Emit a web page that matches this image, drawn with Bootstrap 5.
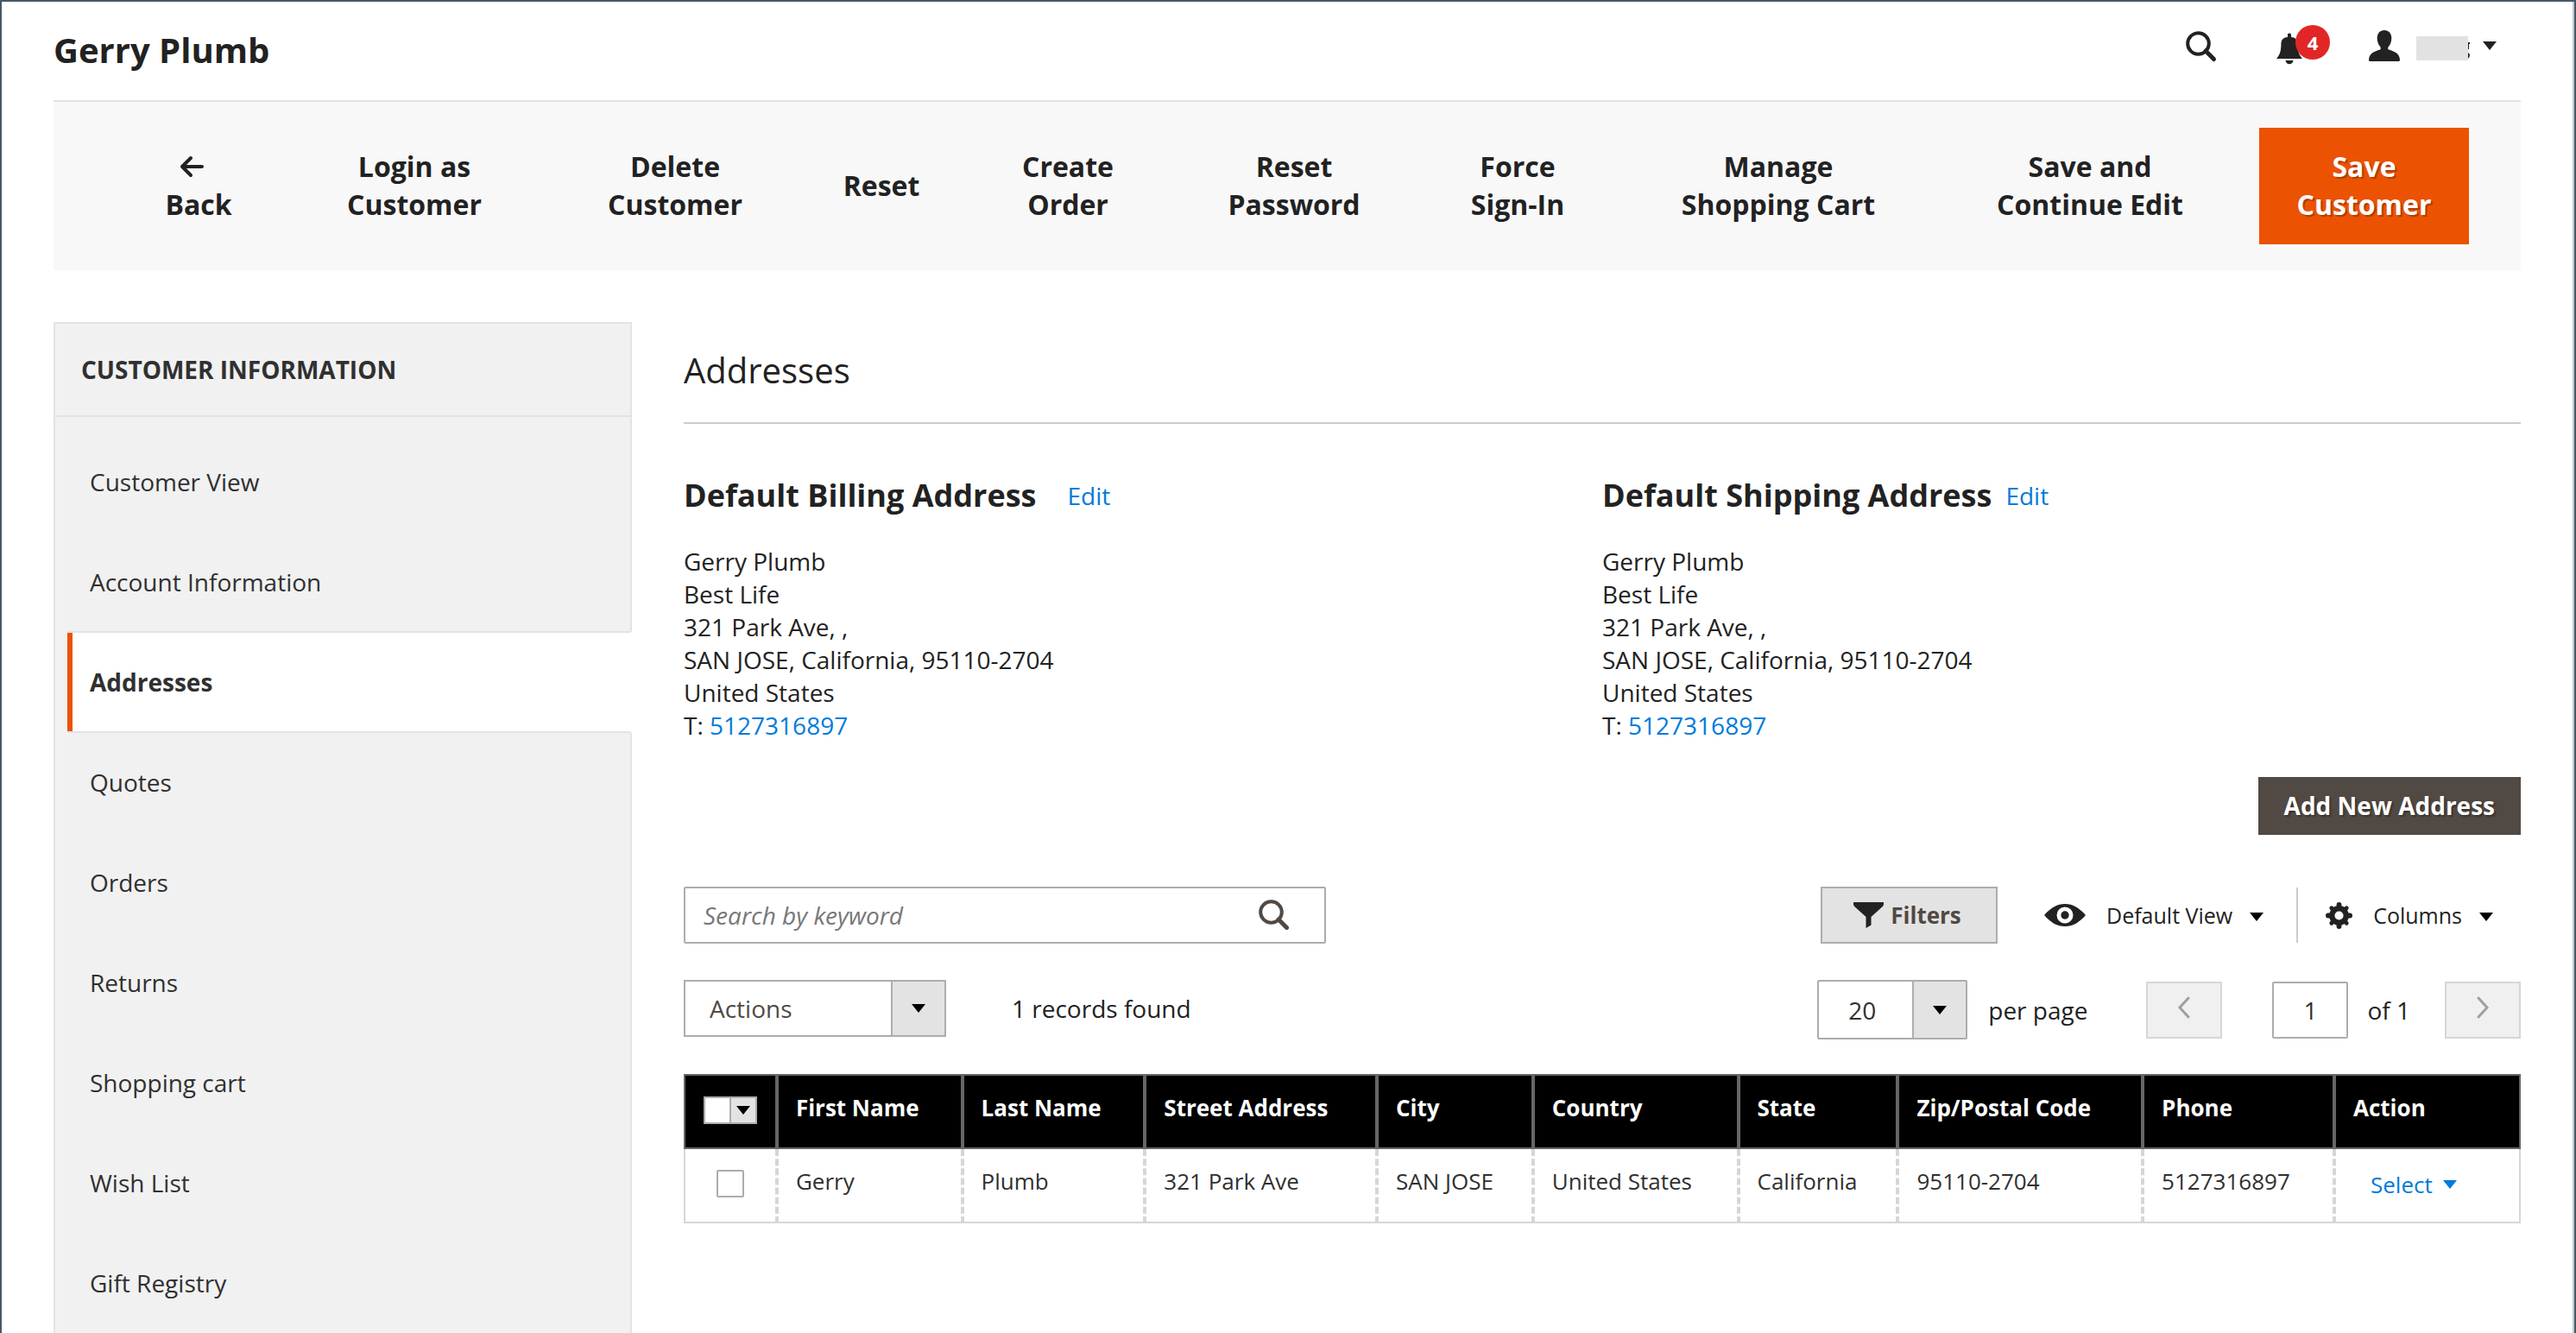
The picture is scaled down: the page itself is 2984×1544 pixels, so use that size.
<!DOCTYPE html>
<html lang="en">
<head>
<meta charset="utf-8">
<meta name="viewport" content="width=device-width, initial-scale=1">
<title>Gerry Plumb - Customers</title>
<link rel="stylesheet" href="https://cdn.jsdelivr.net/npm/bootstrap@5.3.0/dist/css/bootstrap.min.css">
<style>
  body { font-family: "Open Sans", "Noto Sans", sans-serif; font-size: 28px; line-height: 38px; color: #222; background: #fff; }
  a, .select-link { color: #007bdb; text-decoration: none; }
  button { color: inherit; }
  svg { display: block; flex: none; }
  .admin-page { min-height: 100vh; border-top: 2px solid #455a64; border-left: 2px solid #455a64; border-right: 2px solid #455a64; box-shadow: inset -2px 0 #c4cbce; padding: 0 62px 0 60px; }
  .page-head { height: 114px; padding-right: 28px; }
  .page-head h1 { font-size: 40px; line-height: 56px; font-weight: 700; padding-bottom: 2px; }
  .head-tools { padding-bottom: 10px; }
  .bare { background: none; border: 0; padding: 0; border-radius: 0; display: flex; align-items: center; }
  .bell { position: relative; margin: 6px 77px 0 68px; }
  .bell-count { position: absolute; left: 22px; top: -9px; width: 40px; height: 40px; border-radius: 50%; background: #e22626; color: #fff; font-size: 22px; line-height: 40px; font-weight: 700; text-align: center; }
  .account { padding-bottom: 2px; }
  .redacted { margin: 6px 15px 0 19px; }
  .action-bar { display: grid; grid-template-columns: 190fr 310fr 294fr 184fr 248fr 276fr 242fr 362fr 376fr 243fr; background: #f8f8f8; border-top: 2px solid #e3e3e3; padding: 30px 60px 30px 73px; font-size: 32px; line-height: 44px; }
  .action-bar button { background: none; border: 0; padding: 0 0 2px; min-height: 135px; font-weight: 700; }
  .action-bar .wide-end { padding-right: 16px; }
  .action-bar .save { background: #eb5202; color: #fff; text-shadow: 2px 2px 0 rgba(0,0,0,.25); }
  .back-arrow { height: 44px; margin-right: 16px; }
  .page-body { margin-top: 60px; gap: 60px; }
  .side { width: 670px; flex: none; background: #f1f1f1; border: 2px solid #e3e3e3; border-bottom: 0; color: #303030; }
  .side h2 { font-size: 28px; line-height: 38px; font-weight: 700; padding: 34px 30px; border-bottom: 2px solid #e3e3e3; margin: 0; text-transform: uppercase; }
  .side ul { margin: 0; padding: 16px 0 0 14px; list-style: none; }
  .side li a { display: block; color: #303030; border: 2px solid transparent; border-left: 6px solid transparent; padding: 38px 20px; margin-bottom: -2px; }
  .side li a.active { background: #fff; border-color: #e3e3e3 #fff #e3e3e3 #eb5202; margin-right: -2px; font-weight: 700; position: relative; border-left-style: none; padding-left: 26px; box-shadow: inset 6px 0 #eb5202; }
  .section-title { font-size: 40px; line-height: 56px; font-weight: 400; padding: 28px 0 32px; border-bottom: 2px solid #ccc; margin: 0 0 58px; }
  .addr-head { gap: 16px; }
  .addr-head.spaced { gap: 36px; }
  .addr-head h3 { font-size: 36px; line-height: 50px; font-weight: 700; margin: 0; }
  address { margin: 32px 0 41px; line-height: 38px; }
  .add-new { background: #514943; color: #fff; border: 0; padding: 14px 30px 15px; font-weight: 700; line-height: 38px; text-shadow: 2px 2px 2px rgba(0,0,0,.3); }
  .boxed { border: 2px solid #adadad; background: #fff; height: 66px; border-radius: 2px; }
  .search-box { width: 744px; }
  .search-box input { border: 0; outline: 0; background: none; font-size: 28px; padding: 0 21px; min-width: 0; }
  .search-box input::placeholder { color: #777; font-style: italic; opacity: 1; }
  .grid-tools { margin-top: 60px; font-size: 26px; }
  .filters-btn { width: 205px; background: #e3e3e3; color: #514943; font-weight: 700; border-radius: 0; gap: 8px; padding: 0 4px 0 0; }
  .view-btn, .cols-btn { font-size: 25px; }
  .view-btn { padding-left: 54px; }
  .caret-after { margin: 4px 0 0 20px; }
  .cols-btn { border-left: 2px solid #ccc; padding: 0 32px; height: 64px; margin-left: 38px; }
  .grid-pager { margin-top: 42px; height: 69px; }
  .found { line-height: 66px; margin-left: 76px; }
  .pick { position: relative; }
  .pick select { appearance: none; width: 100%; height: 100%; border: 0; background: none; color: inherit; padding: 0 28px; font-size: 28px; outline: 0; }
  .pick-arrow { position: absolute; right: 0; top: 0; bottom: 0; width: 62px; background: #e3e3e3; border-left: 2px solid #adadad; display: flex; align-items: center; justify-content: center; pointer-events: none; }
  .pick-actions { width: 304px; color: #514943; border-radius: 0; }
  .pick-size { width: 174px; height: 69px; color: #303030; }
  .pick-size select { padding: 0 34px; }
  .pick-all { width: 62px; height: 32px; margin: 0 auto; background: #fff; border: 2px solid #adadad; }
  .pick-all .pick-arrow { width: 30px; }
  .step { width: 88px; height: 66px; background: #f0f0f0; border: 2px solid #d6d6d6; padding: 0 0 4px; display: flex; align-items: center; justify-content: center; }
  .step-prev { margin-left: 68px; }
  .step-next { margin-left: 40px; }
  .page-no { width: 88px; text-align: center; font-size: 28px; padding: 0; margin: 0 22px 0 58px; color: #303030; }
  .addr-grid { width: 100%; margin-top: 40px; font-size: 26px; line-height: 36px; border-collapse: collapse; color: #303030; }
  .addr-grid th { background: #000; color: #fff; font-weight: 700; border: 2px solid #666; border-left-width: 4px; border-right-width: 4px; padding: 19px 20px 28px; }
  .addr-grid td { border-bottom: 2px solid #d6d6d6; border-left: 4px dashed #d6d6d6; padding: 19px 20px 29px; }
  .addr-grid th:first-child { border-left-width: 2px; }
  .addr-grid th:last-child { border-right-width: 2px; }
  .addr-grid td:first-child { border-left: 2px solid #d6d6d6; }
  .addr-grid td:last-child { border-right: 2px solid #d6d6d6; }
  .addr-grid .tick { padding: 24px 0 0; vertical-align: top; }
  .tick input { appearance: none; display: block; width: 32px; height: 32px; margin: 0 auto; border: 2px solid #adadad; border-radius: 2px; background: #fff; }
  .select-link { gap: 12px; padding: 4px 20px 0; margin-bottom: -4px; }
  .c1{width:107px}.c2{width:215px}.c3{width:212px}.c4{width:269px}.c5{width:181px}.c6{width:238px}.c7{width:185px}.c8{width:284px}.c9{width:222px}.c10{width:215px}
</style>
<script src="https://cdn.jsdelivr.net/npm/bootstrap@5.3.0/dist/js/bootstrap.bundle.min.js"></script>
</head>
<body>
<div class="admin-page d-flex flex-column">
  <header class="page-head d-flex align-items-center justify-content-between">
    <h1 class="m-0">Gerry Plumb</h1>
    <div class="head-tools d-flex align-items-center">
      <button class="bare" type="button" aria-label="Search">
        <svg width="38" height="38" viewBox="0 0 38 38" fill="none" stroke="#222" stroke-width="4"><circle cx="15.500" cy="15.500" r="12.300"/><path d="M24 24l9.500 9.500" stroke-width="5" stroke-linecap="round"/></svg>
      </button>
      <button class="bare bell" type="button" aria-label="Notifications">
        <svg width="30" height="38" viewBox="0 0 30 38" fill="#222"><path d="M13 1.500q2-2 4 0V5c5.500.7 7.500 3.200 7.600 8 .1 8 1.400 12.500 5.400 17H0c4-4.500 5.300-9 5.400-17C5.500 8.200 7.500 5.700 13 5zM10.500 32h9c-.5 3-2.400 4.200-4.500 4.200s-4-1.200-4.500-4.200z"/></svg>
        <span class="bell-count">4</span>
      </button>
      <button class="bare account" type="button" aria-label="Account">
        <svg width="36" height="36" viewBox="0 0 36 36" fill="#222"><path d="M18 0c5.300 0 8.400 4 8.300 9.300-.1 4-1.300 7.400-3.600 10-.7 1-.7 2.700.3 3.300 7 2 12.400 4.400 13 11.400.1 1.300-.5 2-1.500 2h-33c-1 0-1.600-.7-1.500-2 .6-7 6-9.400 13-11.400 1-.6 1-2.300.3-3.300-2.300-2.600-3.500-6-3.600-10C9.600 4 12.700 0 18 0z"/></svg>
        <svg class="redacted" width="62" height="28" viewBox="0 0 62 28"><path fill="#e2e2e2" d="M0 0h60v28H0z"/><path fill="#222" d="M60 7h2v2h-1v6h-1zM60 19q2 1 2 3t-2 4z"/></svg>
        <svg width="16" height="10" fill="#222"><path d="M0 0h16L8 10z"/></svg>
      </button>
    </div>
  </header>

  <div class="action-bar">
    <button type="button"><span class="d-flex justify-content-center align-items-center back-arrow"><svg width="28" height="26" viewBox="0 0 28 26" fill="none" stroke="#222" stroke-width="4" stroke-linecap="round" stroke-linejoin="round"><path d="M26 13H3M13 3L3 13l10 10"/></svg></span>Back</button>
    <button type="button">Login as<br>Customer</button>
    <button type="button">Delete<br>Customer</button>
    <button type="button">Reset</button>
    <button type="button">Create<br>Order</button>
    <button type="button">Reset<br>Password</button>
    <button type="button">Force<br>Sign-In</button>
    <button type="button">Manage<br>Shopping Cart</button>
    <button type="button" class="wide-end">Save and<br>Continue Edit</button>
    <button type="button" class="save">Save<br>Customer</button>
  </div>

  <div class="page-body d-flex flex-grow-1">
    <nav class="side" aria-label="Customer Information">
      <h2>Customer Information</h2>
      <ul>
        <li><a href="#">Customer View</a></li>
        <li><a href="#">Account Information</a></li>
        <li><a href="#" class="active" aria-current="page">Addresses</a></li>
        <li><a href="#">Quotes</a></li>
        <li><a href="#">Orders</a></li>
        <li><a href="#">Returns</a></li>
        <li><a href="#">Shopping cart</a></li>
        <li><a href="#">Wish List</a></li>
        <li><a href="#">Gift Registry</a></li>
      </ul>
    </nav>

    <main class="flex-grow-1">
      <h2 class="section-title">Addresses</h2>
      <div class="row g-0">
        <section class="col-6">
          <div class="addr-head spaced d-flex align-items-center"><h3>Default Billing Address</h3><a href="#">Edit</a></div>
          <address>Gerry Plumb<br>Best Life<br>321 Park Ave, ,<br>SAN JOSE, California, 95110-2704<br>United States<br>T: <a href="tel:5127316897">5127316897</a></address>
        </section>
        <section class="col-6">
          <div class="addr-head d-flex align-items-center"><h3>Default Shipping Address</h3><a href="#">Edit</a></div>
          <address>Gerry Plumb<br>Best Life<br>321 Park Ave, ,<br>SAN JOSE, California, 95110-2704<br>United States<br>T: <a href="tel:5127316897">5127316897</a></address>
        </section>
      </div>
      <div class="d-flex justify-content-end"><button class="add-new" type="button">Add New Address</button></div>

      <div class="grid-tools d-flex align-items-center">
        <div class="boxed search-box d-flex align-items-center me-auto">
          <input class="flex-grow-1" type="text" placeholder="Search by keyword" aria-label="Search by keyword">
          <button class="bare me-4 pe-3" type="button" aria-label="Search">
            <svg width="36" height="36" viewBox="0 0 36 36" fill="none" stroke="#514943" stroke-width="4"><circle cx="14.500" cy="14.500" r="12.300"/><path d="M23 23l9.500 9.500" stroke-width="5" stroke-linecap="round"/></svg>
          </button>
        </div>
        <button class="boxed filters-btn d-flex align-items-center justify-content-center" type="button">
          <svg width="35" height="30" viewBox="0 0 35 30" fill="#222"><path d="M0 0h35v2c0 1.500-.5 2.300-1.500 3.300L20.500 17v9.500L14.500 30V17L1.500 5.300C.5 4.300 0 3.500 0 2z"/></svg>Filters</button>
        <button class="bare view-btn" type="button">
          <svg class="me-4" width="48" height="28" viewBox="0 0 48 28"><path fill="#222" fill-rule="evenodd" d="M0 14C8 5 15 1 24 1s16 4 24 13c-8 9-15 13-24 13S8 23 0 14zM24 4.500a9.500 9.500 0 1 0 0 19 9.500 9.500 0 0 0 0-19z"/><circle cx="24" cy="14" r="4.700" fill="#222"/></svg>
          Default View
          <svg class="caret-after" width="16" height="10"><path d="M0 0h16L8 10z"/></svg>
        </button>
        <button class="bare cols-btn" type="button">
          <svg class="me-4" width="31" height="31" viewBox="0 0 32 32" fill="none" stroke="#222"><circle cx="16" cy="16" r="8.500" stroke-width="6.500"/><path stroke-width="6" stroke-linecap="round" d="M16 3v3M16 26v3M3 16h3M26 16h3"/><path stroke-width="5" stroke-linecap="round" d="M7 7l2 2M23 23l2 2M25 7l-2 2M9 23l-2 2"/></svg>
          Columns
          <svg class="caret-after" width="16" height="10"><path d="M0 0h16L8 10z"/></svg>
        </button>
      </div>

      <div class="grid-pager d-flex align-items-center">
        <div class="boxed pick pick-actions align-self-start">
          <select aria-label="Actions"><option>Actions</option></select>
          <span class="pick-arrow"><svg width="16" height="10"><path d="M0 0h16L8 10z"/></svg></span>
        </div>
        <span class="found align-self-start me-auto">1 records found</span>
        <div class="boxed pick pick-size">
          <select id="page-size"><option>20</option></select>
          <span class="pick-arrow"><svg width="16" height="10"><path d="M0 0h16L8 10z"/></svg></span>
        </div>
        <label class="ms-4" for="page-size">per page</label>
        <button class="step step-prev" type="button" aria-label="Previous page"><svg width="16" height="27" fill="none" stroke="#a39e99" stroke-width="3" stroke-linecap="round"><path d="M13 2L3 13l10 11"/></svg></button>
        <input id="page-no" class="boxed page-no" type="text" value="1">
        <label for="page-no">of 1</label>
        <button class="step step-next" type="button" aria-label="Next page"><svg width="16" height="27" fill="none" stroke="#a39e99" stroke-width="3" stroke-linecap="round"><path d="M3 2l10 11L3 24"/></svg></button>
      </div>

      <table class="addr-grid">
        <colgroup><col class="c1"><col class="c2"><col class="c3"><col class="c4"><col class="c5"><col class="c6"><col class="c7"><col class="c8"><col class="c9"><col class="c10"></colgroup>
        <thead>
          <tr>
            <th class="tick"><div class="pick pick-all"><select aria-label="Select rows"><option></option></select><span class="pick-arrow"><svg width="16" height="10"><path d="M0 0h16L8 10z"/></svg></span></div></th>
            <th>First Name</th><th>Last Name</th><th>Street Address</th><th>City</th><th>Country</th><th>State</th><th>Zip/Postal Code</th><th>Phone</th><th>Action</th>
          </tr>
        </thead>
        <tbody>
          <tr>
            <td class="tick"><input type="checkbox" aria-label="Select Gerry Plumb"></td>
            <td>Gerry</td><td>Plumb</td><td>321 Park Ave</td><td>SAN JOSE</td><td>United States</td><td>California</td><td>95110-2704</td><td>5127316897</td>
            <td><button class="bare select-link" type="button">Select <svg width="16" height="10" fill="#007bdb"><path d="M0 0h16L8 10z"/></svg></button></td>
          </tr>
        </tbody>
      </table>
    </main>
  </div>
</div>
</body>
</html>
